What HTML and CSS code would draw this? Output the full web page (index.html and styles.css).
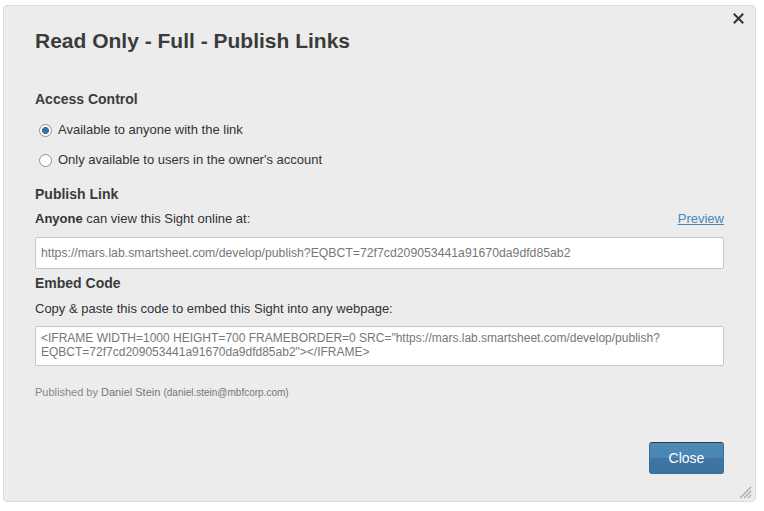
FILE: index.html
```html
<!DOCTYPE html>
<html>
<head>
<meta charset="utf-8">
<link rel="stylesheet" href="styles.css">
</head>
<body>
<div class="dialog">
  <button class="close-x" aria-label="Close">
    <svg width="11" height="11" viewBox="0 0 11 11"><path d="M1.5 1.5 L9.5 9.5 M9.5 1.5 L1.5 9.5" stroke="#333" stroke-width="2" stroke-linecap="square"/></svg>
  </button>
  <h1 class="title">Read Only - Full - Publish Links</h1>

  <h2 class="section access">Access Control</h2>
  <div class="radios">
    <label class="radio-row"><input type="radio" name="acc" class="radio" checked> Available to anyone with the link</label>
    <label class="radio-row"><input type="radio" name="acc" class="radio"> Only available to users in the owner's account</label>
  </div>

  <h2 class="section publish">Publish Link</h2>
  <div class="line-row">
    <span><b>Anyone</b> can view this Sight online at:</span>
    <a class="preview" href="#">Preview</a>
  </div>
  <div class="field link">https://mars.lab.smartsheet.com/develop/publish?EQBCT=72f7cd209053441a91670da9dfd85ab2</div>

  <h2 class="section embed">Embed Code</h2>
  <div class="line-row copy">Copy &amp; paste this code to embed this Sight into any webpage:</div>
  <div class="field area">&lt;IFRAME WIDTH=1000 HEIGHT=700 FRAMEBORDER=0 SRC="https://mars.lab.smartsheet.com/develop/publish?<br>EQBCT=72f7cd209053441a91670da9dfd85ab2"&gt;&lt;/IFRAME&gt;</div>

  <div class="published">Published by <span class="name">Daniel Stein</span> <span class="email">(daniel.stein@mbfcorp.com)</span></div>

  <div class="footer">
    <button class="btn-close">Close</button>
  </div>

  <svg class="grip" width="13" height="13" viewBox="0 0 13 13">
    <path d="M1 12 L12 1 M5 12 L12 5 M9 12 L12 9" stroke="#a8a8a8" stroke-width="1.2"/>
  </svg>
</div>
</body>
</html>
```
FILE: styles.css
```css
html, body {
  margin: 0;
  padding: 0;
  background: #ffffff;
}
body {
  font-family: "Liberation Sans", Arial, sans-serif;
  color: #333;
}
.dialog {
  position: relative;
  box-sizing: border-box;
  width: 753px;
  height: 497px;
  margin: 5px 0 0 3px;
  padding: 23px 31px 0 31px;
  background: #ececec;
  border: 1px solid #dcdcdc;
  border-radius: 4px;
  display: flex;
  flex-direction: column;
}
.close-x {
  position: absolute;
  top: 7px;
  right: 11px;
  padding: 0;
  border: 0;
  background: none;
  width: 11px;
  height: 11px;
  line-height: 0;
}
.title {
  margin: 0;
  font-size: 21px;
  line-height: 24px;
  font-weight: bold;
  color: #3b3b3b;
}
.section {
  margin: 0;
  font-size: 14px;
  line-height: 18px;
  font-weight: bold;
  color: #3b3b3b;
}
.access { margin-top: 37px; }
.radios {
  display: flex;
  flex-direction: column;
  gap: 10px;
  margin-top: 12px;
}
.radio-row {
  display: flex;
  align-items: center;
  font-size: 13px;
  line-height: 20px;
  color: #333;
  padding-left: 4px;
}
.radio {
  appearance: none;
  -webkit-appearance: none;
  box-sizing: border-box;
  width: 13px;
  height: 13px;
  margin: 0 6px 0 0;
  border: 1px solid #8f8f8f;
  border-radius: 50%;
  background: #fff;
  position: relative;
}
.radio:checked {
  background: radial-gradient(circle, #3d6ea8 0, #3d6ea8 3.2px, #fff 3.8px);
}
.publish { margin-top: 15px; }
.line-row {
  display: flex;
  justify-content: space-between;
  font-size: 13px;
  line-height: 18px;
  margin-top: 7px;
  color: #333;
}
.line-row b { color: #333; }
.preview {
  color: #4a86b8;
  text-decoration: underline;
}
.field {
  box-sizing: border-box;
  height: 32px;
  margin-top: 10px;
  padding: 0 5px;
  background: #fff;
  border: 1px solid #c6c6c6;
  border-radius: 2px;
  font-size: 12.25px;
  line-height: 30px;
  color: #777;
  white-space: nowrap;
}
.field.link { margin-top: 9px; }
.embed { margin-top: 5px; }
.copy { margin-top: 8px; }
.field.area {
  height: 40px;
  margin-top: 8px;
  padding-top: 4px;
  font-size: 12px;
  line-height: 14px;
}
.published {
  margin-top: 18px;
  font-size: 11px;
  line-height: 16px;
  color: #888;
}
.published .name { color: #777; }
.published .email { font-size: 10px; color: #777; }
.footer {
  display: flex;
  justify-content: flex-end;
  margin-top: 41px;
}
.btn-close {
  width: 75px;
  height: 32px;
  border: 1px solid #3e6f98;
  border-top-color: #3a3a3a;
  border-radius: 3px;
  background: linear-gradient(#4e8ab8 0, #4a86b4 50%, #3f76a4 51%, #3d72a0 100%);
  color: #fff;
  font-family: "Liberation Sans", Arial, sans-serif;
  font-size: 14px;
  padding: 0;
}
.grip {
  position: absolute;
  right: 3px;
  bottom: 2px;
}
```
